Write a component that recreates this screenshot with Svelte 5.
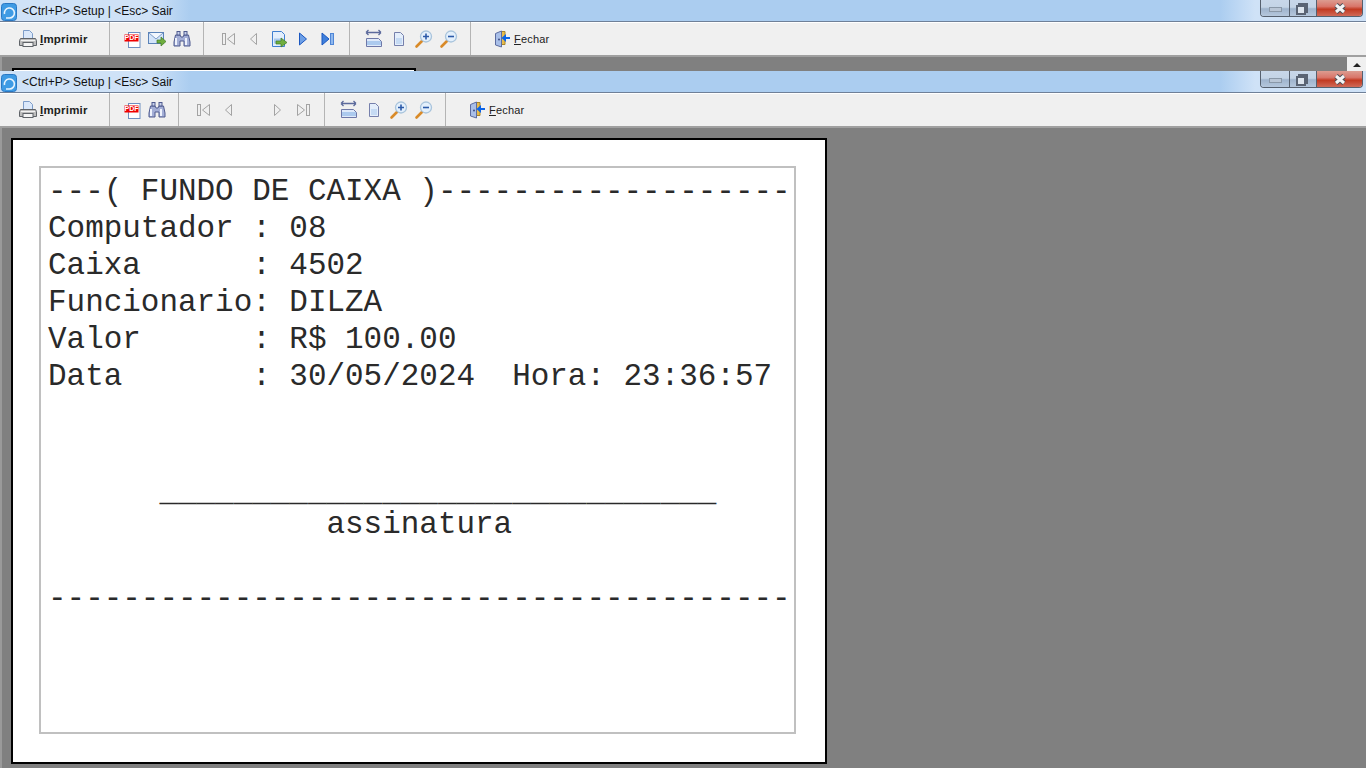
<script>
	const lines = [
		'---( FUNDO DE CAIXA )-------------------',
		'Computador : 08',
		'Caixa      : 4502',
		'Funcionario: DILZA',
		'Valor      : R$ 100.00',
		'Data       : 30/05/2024  Hora: 23:36:57',
		'',
		'',
		'      ______________________________',
		'               assinatura',
		'',
		'----------------------------------------'
	];

	const backGroups = [
		['pdf', 'mail', 'find'],
		['first', 'prev', 'export', 'nextOn', 'lastOn'],
		['width', 'page', 'zoomIn', 'zoomOut']
	];
	const frontGroups = [
		['pdf', 'find'],
		['first', 'prev', 'blank', 'next', 'last'],
		['width', 'page', 'zoomIn', 'zoomOut']
	];
</script>

{#snippet icon(name)}
	<svg width="20" height="20" viewBox="0 0 20 20">
		{#if name === 'printer'}
			<path d="M5.500 1.500h6l3 3v5h-9z" fill="#dbe8fa" stroke="#7d9cc8" />
			<path d="M2.500 9.500h15l1 2v5h-17v-5z" fill="#bdbdbd" stroke="#5f6368" />
			<rect x="5" y="13.500" width="10" height="4" fill="#f4f4f4" stroke="#5f6368" />
			<path d="M3 11.500h14" stroke="#f2f2f2" />
		{:else if name === 'pdf'}
			<rect x="6.500" y="3.500" width="11.500" height="15" fill="#fff" stroke="#6f8fc0" />
			<rect x="2.500" y="5.500" width="14" height="7" fill="#f00000" />
			<text x="9.500" y="11.300" class="pdf">PDF</text>
		{:else if name === 'mail'}
			<rect x="1.500" y="3.500" width="15" height="11" fill="#d4e5fa" stroke="#5b83b8" />
			<path d="M2 4l7 6 7-6" fill="#f2f7fe" stroke="#7d9cc8" />
			<path d="M10 11h4V8l5 4.500-5 4.500v-3h-4z" fill="#6fae3e" stroke="#3f7a27" stroke-width=".7" />
		{:else if name === 'find'}
			<path d="M3.500 6h4.500l1 2h2l1-2h4.500l1.500 7v4h-6v-5h-4v5h-6v-4z" fill="#a3aed6" stroke="#4f5a8e" />
			<rect x="5" y="2.500" width="3" height="3.500" fill="#c6d0ec" stroke="#4f5a8e" />
			<rect x="12" y="2.500" width="3" height="3.500" fill="#c6d0ec" stroke="#4f5a8e" />
			<path d="M4 9v7M14 9v7" stroke="#eef2fc" stroke-width="2" />
		{:else if name === 'first' || name === 'last'}
			<g fill="#f0f0f0" stroke="#a3a3a3" transform={name === 'last' ? 'matrix(-1 0 0 1 19 0)' : ''}>
				<rect x="3.500" y="4.500" width="3" height="11" />
				<path d="M15.500 4.500v11l-7-5.500z" />
			</g>
		{:else if name === 'prev' || name === 'next'}
			<path d="M12.500 4.500v11l-6-5.500z" fill="#f0f0f0" stroke="#a3a3a3" transform={name === 'next' ? 'matrix(-1 0 0 1 18 0)' : ''} />
		{:else if name === 'nextOn'}
			<path d="M5.500 4v12l7-6z" fill="#6d9fe6" stroke="#1b57c0" />
		{:else if name === 'lastOn'}
			<path d="M3 4v12l7-6z" fill="#3f80dc" stroke="#1b57c0" />
			<rect x="11.500" y="4.500" width="3" height="11" fill="#8fb8ee" stroke="#4f86d6" />
		{:else if name === 'export'}
			<path d="M3.500 2.500h9l3 3v12h-12z" fill="#e2eefc" stroke="#3f7fd0" />
			<path d="M5 12h8" stroke="#a8c8ee" stroke-width="5" />
			<path d="M7 12h5V9l6 4.500-6 4.500v-3H7z" fill="#6fae3e" stroke="#3f7a27" stroke-width=".7" />
		{:else if name === 'width'}
			<path d="M2 3.500h15M2 3.500l2.500-2.500M2 3.500l2.500 2.500M17 3.500l-2.500-2.500M17 3.500l-2.500 2.500" fill="none" stroke="#5c6a9c" stroke-width="1.300" />
			<path d="M2.500 9.500h12l3 3v5h-15z" fill="#dfeafa" stroke="#6e78a8" />
			<path d="M3 13h14M3 15h14" stroke="#9cc0ea" stroke-width="1.300" />
		{:else if name === 'page'}
			<path d="M5.500 3.500h6l3 3v10h-9z" fill="#e4eefb" stroke="#7680ac" />
			<path d="M7 10h6M7 12h6M7 14h6" stroke="#a6c6ec" />
		{:else if name === 'zoomIn' || name === 'zoomOut'}
			<path d="M2.500 17.500l6-6" stroke="#d98a28" stroke-width="2.600" stroke-linecap="round" />
			<circle cx="12" cy="7.500" r="5.500" fill="#e4f0fc" stroke="#a9c4dc" stroke-width="1.300" />
			<path d={name === 'zoomIn' ? 'M9 7.500h6M12 4.500v6' : 'M9 7.500h6'} stroke="#2c5aa8" stroke-width="1.600" />
		{:else if name === 'door'}
			<path d="M9 2.500h4v13h-4z" fill="#e8bc4c" stroke="#a8862c" />
			<path d="M3.500 4.500l6-2.500v16l-6-2z" fill="#a9bfe8" stroke="#5c6ca0" />
			<circle cx="7" cy="10.500" r="1" fill="#3f4f86" />
			<path d="M18 8h-4V5l-4.500 4 4.500 4v-3h4z" fill="#0a63e8" />
		{/if}
	</svg>
{/snippet}

{#snippet win(groups, label)}
	<div class="titlebar">
		<svg class="appicon" width="16" height="18" viewBox="0 0 16 18">
			<rect x=".5" y=".5" width="15" height="17" rx="3" fill="#3f9be4" stroke="#2a78c4" />
			<path d="M3.500 11a5 5 0 1 1 5 4H5" fill="none" stroke="#e8f4fe" stroke-width="1.600" />
		</svg>
		<span>{label}</span>
		<div class="controls">
			<div class="ctl min"><i></i></div>
			<div class="ctl restore"><b></b><b></b></div>
			<div class="ctl close">
				<svg width="14" height="11" viewBox="0 0 14 11">
					<path d="M3 2l8 7M11 2l-8 7" stroke="#4a4f58" stroke-width="5" />
					<path d="M3 2l8 7M11 2l-8 7" stroke="#f4f4f4" stroke-width="3" />
				</svg>
			</div>
		</div>
	</div>
	<div class="toolbar">
		<div class="group print">
			{@render icon('printer')}
			<span class="caption"><u>I</u>mprimir</span>
		</div>
		{#each groups as group, i}
			<div class="group icons" class:nav={i === 1} class:view={i === 2}>
				{#each group as name}
					<div class="btn">{@render icon(name)}</div>
				{/each}
			</div>
		{/each}
		<div class="group quit">
			{@render icon('door')}
			<span class="caption plain"><u>F</u>echar</span>
		</div>
	</div>
{/snippet}

<div class="window back">
	{@render win(backGroups, '<Ctrl+P> Setup | <Esc> Sair')}
	<div class="workspace top">
		<div class="peek"></div>
		<div class="scrollup"><s></s></div>
	</div>
</div>

<div class="window front">
	{@render win(frontGroups, '<Ctrl+P> Setup | <Esc> Sair')}
	<div class="workspace">
		<div class="page">
			<div class="frame">
				{#each lines as line}
					<div class="row" class:rule={line.includes('___')}>{line}</div>
				{/each}
			</div>
		</div>
	</div>
</div>

<style>
	:global(body) {
		overflow: hidden;
		background: #808080;
	}

	.window {
		display: flex;
		flex-direction: column;
		overflow: hidden;
		font-family: 'Liberation Sans', Arial, sans-serif;
	}
	.back {
		height: 71px;
	}
	.front {
		height: 697px;
	}

	.titlebar {
		flex: none;
		height: 21px;
		display: flex;
		align-items: center;
		gap: 5px;
		padding-left: 1px;
		box-sizing: border-box;
		background:
			linear-gradient(90deg, transparent 1220px, #cfe2f7 1255px),
			linear-gradient(90deg, #cfe2f7 0, #cfe2f7 150px, #abcdf0 190px);
		font-size: 12px;
		color: #111;
	}
	.appicon {
		flex: none;
		margin-top: 2px;
	}

	.controls {
		display: flex;
		margin-left: auto;
		margin-right: 3px;
		align-self: flex-start;
		height: 17px;
		border: 1px solid #56606e;
		border-top: 0;
		border-radius: 0 0 4px 4px;
		overflow: hidden;
		box-sizing: border-box;
		width: 103px;
	}
	.ctl {
		display: flex;
		align-items: center;
		justify-content: center;
		position: relative;
	}
	.min,
	.restore {
		background: linear-gradient(#c8d7e9 0, #c4d4e6 45%, #9fb4cd 55%, #b5c7dc 100%);
		border-right: 1px solid #56606e;
	}
	.min {
		width: 28px;
	}
	.min i {
		width: 11px;
		height: 3px;
		margin-top: 3px;
		background: #b9c6d6;
		border: 1px solid #8a98a8;
	}
	.restore {
		width: 26px;
	}
	.restore b {
		position: absolute;
		width: 6px;
		height: 6px;
		border: 2px solid #5a6474;
		background: #dde5ee;
		left: 6px;
		top: 5px;
	}
	.restore b:first-child {
		left: 8px;
		top: 3px;
	}
	.close {
		flex: 1;
		background: linear-gradient(#dc9c90 0, #d9766a 40%, #c23a22 58%, #d06a58 100%);
	}

	.toolbar {
		flex: none;
		display: flex;
		height: 36px;
		box-sizing: border-box;
		background: #f0f0f0;
		border-top: 1px solid #6f8098;
		border-bottom: 2px solid #a0a0a0;
		box-shadow: inset 0 1px 0 #fff;
		color: #222;
	}
	.group {
		display: flex;
		align-items: center;
		box-sizing: border-box;
		border-right: 1px solid #b4b4b4;
		padding-top: 1px;
	}
	.group:last-child {
		border-right: 0;
	}
	.print {
		width: 110px;
		padding-left: 18px;
		gap: 2px;
	}
	.icons {
		padding-left: 9px;
		padding-right: 9px;
	}
	.nav {
		padding-left: 12px;
		padding-right: 8px;
	}
	.view {
		padding-left: 11px;
		padding-right: 9px;
	}
	.btn {
		width: 25px;
		display: flex;
		justify-content: center;
	}
	.quit {
		padding-left: 21px;
		gap: 2px;
	}
	.caption {
		font-weight: 700;
		font-size: 11.500px;
		letter-spacing: 0.2px;
	}
	.caption.plain {
		font-weight: 400;
		font-size: 11px;
	}
	.pdf {
		font: 700 7px 'Liberation Sans', Arial, sans-serif;
		fill: #fff;
		text-anchor: middle;
	}

	.workspace {
		flex: 1;
		background: #808080;
		border-left: 2px solid #9a9a9a;
		box-sizing: border-box;
		overflow: hidden;
	}
	.workspace.top {
		display: flex;
		justify-content: space-between;
		align-items: flex-start;
	}
	.peek {
		width: 404px;
		height: 10px;
		margin: 11px 0 0 10px;
		box-sizing: border-box;
		background: #fff;
		border: 2px solid #000;
	}
	.scrollup {
		width: 19px;
		height: 14px;
		background: #f0f0f0;
		display: flex;
		align-items: flex-end;
		justify-content: center;
		padding-bottom: 4px;
		box-sizing: border-box;
	}
	.scrollup s {
		width: 0;
		height: 0;
		border: 4px solid transparent;
		border-top: 0;
		border-bottom-color: #222;
	}

	.page {
		width: 816px;
		height: 626px;
		margin: 10px 0 0 9px;
		box-sizing: border-box;
		background: #fff;
		border: 2px solid #000;
		padding: 26px;
	}
	.frame {
		width: 757px;
		height: 568px;
		box-sizing: border-box;
		border: 2px solid #c0c0c0;
		padding: 5px 0 0 7px;
	}
	.row {
		height: 37px;
		white-space: pre;
		font-family: 'Liberation Mono', 'Courier New', monospace;
		font-size: 30.950px;
		line-height: 37px;
		color: #2a2a2a;
	}
	/* underscores sit lower in the original font */
	.rule {
		padding-top: 5px;
		margin-bottom: -5px;
	}
</style>
